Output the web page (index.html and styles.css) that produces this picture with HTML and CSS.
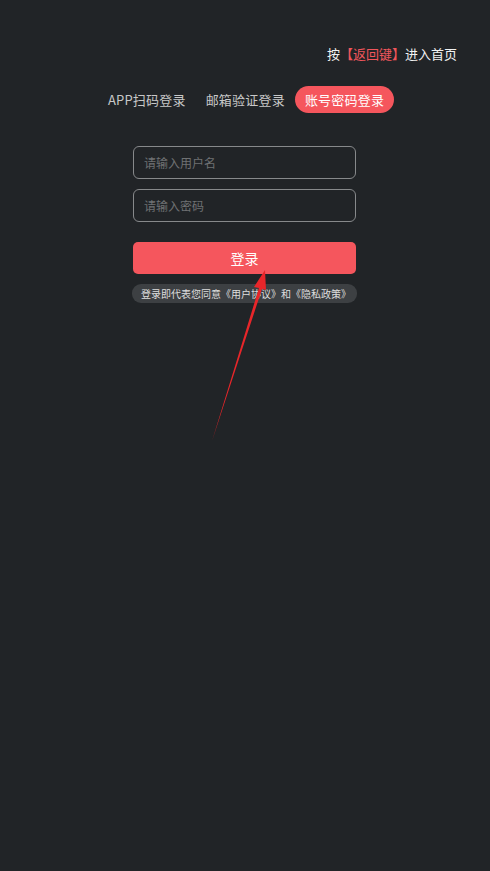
FILE: index.html
```html
<!DOCTYPE html>
<html lang="zh-CN">
<head>
    <meta charset="UTF-8">
    <meta name="viewport" content="width=device-width, initial-scale=1.0">
    <title>登录</title>
    <link rel="stylesheet" href="styles.css">
</head>
<body>
    <div class="page">
        <div class="back-tip">按<span class="key">【返回键】</span>进入首页</div>

        <div class="tabs">
            <span class="tab">APP扫码登录</span>
            <span class="tab">邮箱验证登录</span>
            <span class="tab active">账号密码登录</span>
        </div>

        <form class="login-form" onsubmit="return false">
            <input type="text" class="field" placeholder="请输入用户名">
            <input type="password" class="field" placeholder="请输入密码">
            <button class="login-btn">登录</button>
            <div class="agreement">登录即代表您同意《用户协议》和《隐私政策》</div>
        </form>

        <!-- annotation arrow pointing at the login button -->
        <svg class="arrow" width="490" height="871" viewBox="0 0 490 871">
            <polygon points="212,441 259,288 254,287 265,270 266,290 262,289" fill="#e8262a"/>
        </svg>
    </div>
</body>
</html>
```

FILE: styles.css
```css
html, body {
    margin: 0;
    padding: 0;
    background-color: #212427;
}
body {
    font-family: "Noto Sans CJK SC", "Noto Sans", sans-serif;
    color: #e6e6e6;
}
.page {
    position: relative;
    width: 490px;
    height: 871px;
    overflow: hidden;
}
.back-tip {
    text-align: right;
    padding: 44px 33px 0 0;
    font-size: 13px;
    line-height: 20px;
    color: #f2f2f2;
}
.back-tip .key {
    color: #f0565c;
}
.tabs {
    display: flex;
    justify-content: center;
    margin-top: 22px;
    padding-left: 2px;
}
.tab {
    padding: 0 10px;
    height: 27px;
    line-height: 27px;
    font-size: 13px;
    letter-spacing: 0.2px;
    color: #c8c8c8;
    border-radius: 14px;
}
.tab.active {
    background-color: #f5565d;
    color: #fff;
}
.login-form {
    width: 223px;
    margin: 33px 0 0 133px;
    display: flex;
    flex-direction: column;
}
.field {
    box-sizing: border-box;
    height: 33px;
    margin: 0 0 10px;
    padding: 0 10px;
    border: 1px solid #87898b;
    border-radius: 6px;
    background: transparent;
    color: #ddd;
    font-family: inherit;
    font-size: 12px;
    outline: none;
}
.field::placeholder {
    color: #6f7173;
}
.login-btn {
    height: 32px;
    margin-top: 10px;
    border: none;
    border-radius: 5px;
    background-color: #f5565d;
    color: #fff;
    font-family: inherit;
    font-size: 14px;
    cursor: pointer;
}
.agreement {
    margin: 10px -1px 0;
    height: 19px;
    line-height: 19px;
    padding: 0 9px;
    border-radius: 9px;
    background-color: #3d4043;
    color: #dedede;
    font-size: 10px;
    white-space: nowrap;
}
.arrow {
    position: absolute;
    left: 0;
    top: 0;
    pointer-events: none;
}
```
